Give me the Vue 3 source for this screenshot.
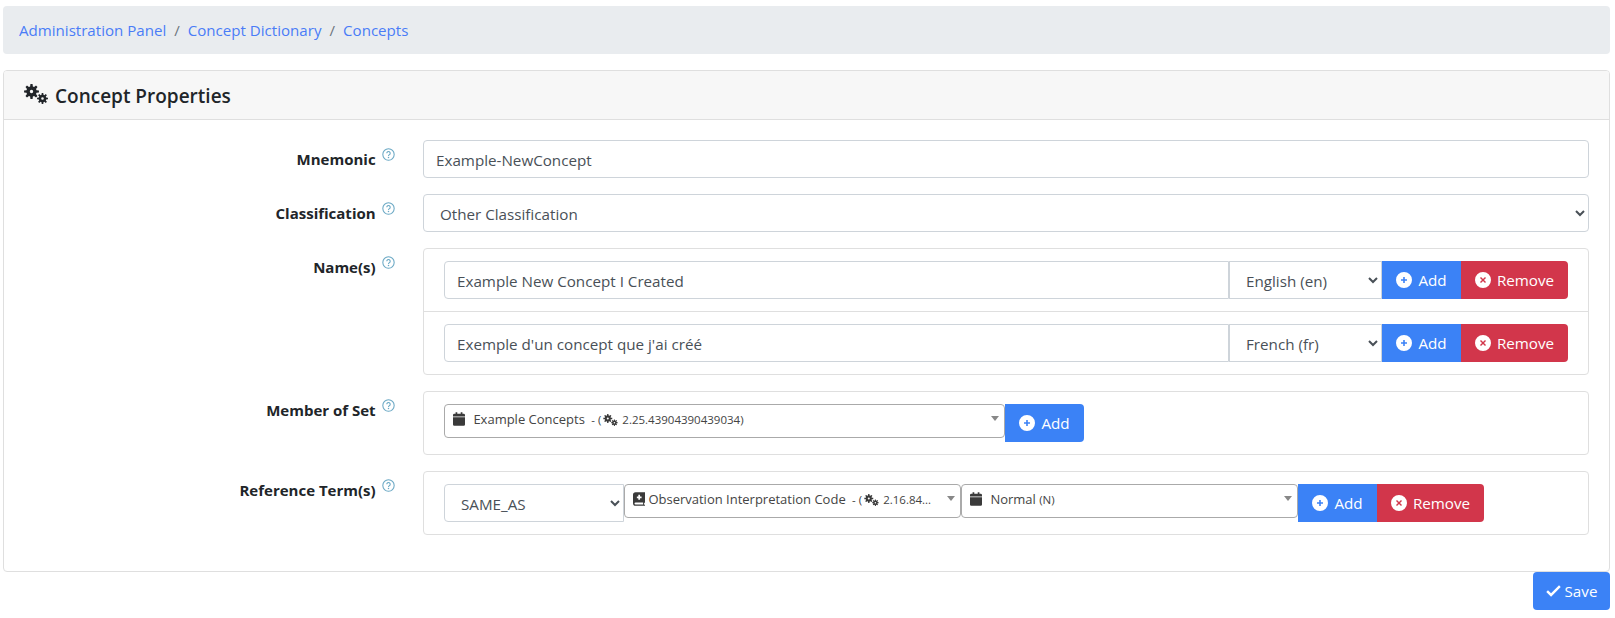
<template>
  <div class="page">
    <svg class="sprites" width="0" height="0" aria-hidden="true">
      <symbol id="i-cogs" viewBox="0 0 24 20">
        <path fill-rule="evenodd" :d="bigGear" />
        <path fill-rule="evenodd" :d="smallGear" />
      </symbol>
      <symbol id="i-calendar" viewBox="0 0 14 16">
        <path d="M3 0h2v2h4V0h2v2h1.500A1.500 1.500 0 0 1 14 3.500V5H0V3.500A1.500 1.500 0 0 1 1.500 2H3zM0 6h14v8.500a1.500 1.500 0 0 1-1.500 1.500h-11A1.500 1.500 0 0 1 0 14.500z" />
      </symbol>
      <symbol id="i-book" viewBox="0 0 14 16">
        <path fill-rule="evenodd" d="M3 0h11v12l-1 .8V14.500l1 .5v1H3a3 3 0 0 1-3-3V3a3 3 0 0 1 3-3zM3 12a1.200 1.200 0 0 0 0 2.500h8.800V12zM6.200 3v2H4.500v2h1.700v2h2V7H10V5H8.200V3z" />
      </symbol>
      <symbol id="i-plus" viewBox="0 0 16 16">
        <path fill-rule="evenodd" d="M8 0a8 8 0 1 0 0 16A8 8 0 0 0 8 0zM7.200 5h1.600v2.200H11v1.600H8.800V11H7.200V8.800H5V7.200h2.200z" />
      </symbol>
      <symbol id="i-times" viewBox="0 0 16 16">
        <path fill-rule="evenodd" d="M8 0a8 8 0 1 0 0 16A8 8 0 0 0 8 0zM6 5l2 2 2-2 1 1-2 2 2 2-1 1-2-2-2 2-1-1 2-2-2-2z" />
      </symbol>
      <symbol id="i-help" viewBox="0 0 16 16">
        <circle cx="8" cy="8" r="7" fill="none" stroke="currentColor" stroke-width="1.300" />
        <path d="M5.900 6.400a2.100 2.100 0 1 1 3.200 1.800c-.8.500-1.100.9-1.100 1.600" fill="none" stroke="currentColor" stroke-width="1.300" />
        <circle cx="8" cy="11.800" r=".9" fill="currentColor" />
      </symbol>
      <symbol id="i-check" viewBox="0 0 16 16">
        <path d="M5.400 13.500.3 8.400l1.800-1.800 3.300 3.300 8.500-8.500 1.800 1.800z" />
      </symbol>
    </svg>

    <nav class="breadcrumb">
      <template v-for="(crumb, i) in crumbs" :key="crumb">
        <span v-if="i > 0" class="crumb-sep">/</span>
        <a class="crumb">{{ crumb }}</a>
      </template>
    </nav>

    <section class="card">
      <header class="card-header">
        <svg class="title-icon"><use href="#i-cogs" /></svg>
        <h5>Concept Properties</h5>
      </header>

      <div class="card-body">
        <div class="form-row">
          <label class="form-label">Mnemonic <svg class="help"><use href="#i-help" /></svg></label>
          <div class="form-field">
            <input class="control" value="Example-NewConcept" />
          </div>
        </div>

        <div class="form-row">
          <label class="form-label">Classification <svg class="help"><use href="#i-help" /></svg></label>
          <div class="form-field">
            <select class="control">
              <option>Other Classification</option>
            </select>
          </div>
        </div>

        <div class="form-row">
          <label class="form-label">Name(s) <svg class="help"><use href="#i-help" /></svg></label>
          <div class="form-field box">
            <div v-for="name in names" :key="name.lang" class="box-row">
              <input class="control grow join-right" :value="name.text" />
              <select class="control lang join-both">
                <option>{{ name.lang }}</option>
              </select>
              <button class="btn btn-add join-both">
                <svg class="btn-icon"><use href="#i-plus" /></svg>Add
              </button>
              <button class="btn btn-remove join-left">
                <svg class="btn-icon"><use href="#i-times" /></svg>Remove
              </button>
            </div>
          </div>
        </div>

        <div class="form-row">
          <label class="form-label">Member of Set <svg class="help"><use href="#i-help" /></svg></label>
          <div class="form-field box">
            <div class="box-row">
              <div class="picker picker-set">
                <span class="picker-text">
                  <svg class="cal"><use href="#i-calendar" /></svg>
                  Example Concepts
                  <small>&nbsp;- (<svg class="mini-cogs"><use href="#i-cogs" /></svg> 2.25.43904390439034)</small>
                </span>
                <i class="caret"></i>
              </div>
              <button class="btn btn-add join-left">
                <svg class="btn-icon"><use href="#i-plus" /></svg>Add
              </button>
            </div>
          </div>
        </div>

        <div class="form-row">
          <label class="form-label">Reference Term(s) <svg class="help"><use href="#i-help" /></svg></label>
          <div class="form-field box">
            <div class="box-row">
              <select class="control relation join-right">
                <option>SAME_AS</option>
              </select>
              <div class="picker picker-ref">
                <span class="picker-text tight">
                  <svg class="cal"><use href="#i-book" /></svg>
                  Observation Interpretation Code
                  <small>&nbsp;- (<svg class="mini-cogs"><use href="#i-cogs" /></svg> 2.16.84...</small>
                </span>
                <i class="caret"></i>
              </div>
              <div class="picker picker-ref">
                <span class="picker-text">
                  <svg class="cal"><use href="#i-calendar" /></svg>
                  Normal <small>(N)</small>
                </span>
                <i class="caret"></i>
              </div>
              <button class="btn btn-add join-both">
                <svg class="btn-icon"><use href="#i-plus" /></svg>Add
              </button>
              <button class="btn btn-remove join-left">
                <svg class="btn-icon"><use href="#i-times" /></svg>Remove
              </button>
            </div>
          </div>
        </div>
      </div>
    </section>

    <div class="actions">
      <button class="btn btn-add btn-save">
        <svg class="check"><use href="#i-check" /></svg>Save
      </button>
    </div>
  </div>
</template>

<script setup>
const crumbs = ['Administration Panel', 'Concept Dictionary', 'Concepts']

const names = [
  { text: 'Example New Concept I Created', lang: 'English (en)' },
  { text: "Exemple d'un concept que j'ai créé", lang: 'French (fr)' }
]

// toothed wheel with a hole in the middle
function gear(cx, cy, outer, inner, hole, teeth) {
  const step = (Math.PI * 2) / teeth
  let d = ''
  for (let t = 0; t < teeth; t++) {
    const a = t * step
    const pts = [
      [inner, a - step * 0.34],
      [outer, a - step * 0.18],
      [outer, a + step * 0.18],
      [inner, a + step * 0.34]
    ]
    for (const [r, ang] of pts) {
      const x = (cx + r * Math.cos(ang)).toFixed(2)
      const y = (cy + r * Math.sin(ang)).toFixed(2)
      d += (d ? 'L' : 'M') + x + ' ' + y
    }
  }
  d += `zM${cx + hole} ${cy}a${hole} ${hole} 0 1 0 ${-2 * hole} 0a${hole} ${hole} 0 1 0 ${2 * hole} 0z`
  return d
}

const bigGear = gear(7.5, 7.5, 7.5, 5.2, 1.7, 8)
const smallGear = gear(18.5, 14.5, 5.5, 3.8, 1.3, 8)
</script>

<style scoped>
.page {
  padding: 6px 5px 0 3px;
  font-family: "Open Sans", "Noto Sans", sans-serif;
  font-size: 15.2px;
  line-height: 24px;
  color: #212529;
}

.sprites {
  position: absolute;
}

.breadcrumb {
  display: flex;
  align-items: center;
  height: 48px;
  padding: 0 16px;
  box-sizing: border-box;
  margin-bottom: 16px;
  background: #e9ecef;
  border-radius: 4px;
  font-size: 15.1px;
}

.crumb {
  color: #4a7cf7;
}

.crumb-sep {
  padding: 0 8px;
  color: #6c757d;
}

.card {
  border: 1px solid #dfdfdf;
  border-radius: 4px;
}

.card-header {
  display: flex;
  align-items: center;
  gap: 7px;
  height: 48px;
  padding: 0 20px;
  background: #f7f7f7;
  border-bottom: 1px solid #dfdfdf;
  border-radius: 3px 3px 0 0;
}

.card-header h5 {
  margin: 2px 0 0;
  font-size: 19px;
  font-weight: 600;
  color: #212529;
}

.title-icon {
  width: 24px;
  height: 20px;
  margin-top: -3px;
  fill: #212529;
}

.card-body {
  padding: 20px;
}

.form-row {
  display: flex;
  margin-bottom: 16px;
}

.form-label {
  flex: 0 0 381.5px;
  box-sizing: border-box;
  margin-left: -11px;
  margin-right: 28.5px;
  padding-top: 7px;
  text-align: right;
  font-weight: 700;
  font-size: 15px;
}

.form-field {
  flex: 1;
  min-width: 0;
}

.help {
  width: 13px;
  height: 13px;
  margin-left: 2px;
  vertical-align: 4px;
  color: #6aa8c4;
}

.control {
  display: block;
  box-sizing: border-box;
  width: 100%;
  height: 38px;
  padding: 7px 12px 5px;
  font: inherit;
  color: #495057;
  background: #fff;
  border: 1px solid #ced4da;
  border-radius: 4px;
  outline: none;
}

.box {
  border: 1px solid #dfdfdf;
  border-radius: 4px;
}

.box-row {
  display: flex;
  align-items: flex-start;
  padding: 12px 20px;
}

.box-row + .box-row {
  border-top: 1px solid #dfdfdf;
}

.grow {
  flex: 1;
  min-width: 0;
}

.lang {
  flex: 0 0 153px;
  width: 153px;
}

.relation {
  flex: 0 0 180px;
  width: 180px;
}

.join-right {
  border-top-right-radius: 0;
  border-bottom-right-radius: 0;
}

.join-left {
  border-top-left-radius: 0;
  border-bottom-left-radius: 0;
}

.join-both {
  border-radius: 0;
}

.btn {
  display: inline-flex;
  align-items: center;
  justify-content: center;
  box-sizing: border-box;
  height: 38px;
  padding: 0 12px;
  font: inherit;
  color: #fff;
  border: none;
  border-radius: 4px;
}

.btn-add {
  flex: 0 0 79px;
  width: 79px;
  background: #3b82f6;
}

.btn-remove {
  flex: 0 0 107px;
  width: 107px;
  background: #d2364b;
}

.btn-add.join-both,
.btn-add.join-left,
.btn-remove.join-left {
  border-top-left-radius: 0;
  border-bottom-left-radius: 0;
}

.btn-add.join-both {
  border-radius: 0;
}

.btn-icon {
  width: 16px;
  height: 16px;
  margin-right: 6px;
  fill: #fff;
}

.picker {
  position: relative;
  box-sizing: border-box;
  height: 34px;
  padding: 0 24px 0 8px;
  background: #fff;
  border: 1px solid #aaa;
  border-radius: 4px;
  font-size: 13px;
  line-height: 29px;
  color: #444;
}

.picker-set {
  flex: 0 0 561px;
  width: 561px;
}

.picker-ref {
  flex: 0 0 337px;
  width: 337px;
}

.picker-text {
  display: block;
  overflow: hidden;
  white-space: nowrap;
}

.picker-text.tight .cal {
  margin-right: 0;
}

.picker-text small {
  font-size: 11.5px;
}

.cal {
  width: 12px;
  height: 14px;
  margin-right: 5px;
  vertical-align: -2px;
  fill: #3a3a3a;
}

.mini-cogs {
  width: 15px;
  height: 12px;
  margin: 0 1px 0 2px;
  vertical-align: -2px;
  fill: #3a3a3a;
}

.caret {
  position: absolute;
  top: 11px;
  right: 5px;
  border-style: solid;
  border-width: 5px 4px 0;
  border-color: #888 transparent transparent;
}

.actions {
  display: flex;
  justify-content: flex-end;
}

.btn-save {
  flex: none;
  width: 77px;
  height: 38px;
  padding: 0;
}

.check {
  width: 15px;
  height: 15px;
  margin-right: 4px;
  fill: #fff;
}
</style>
